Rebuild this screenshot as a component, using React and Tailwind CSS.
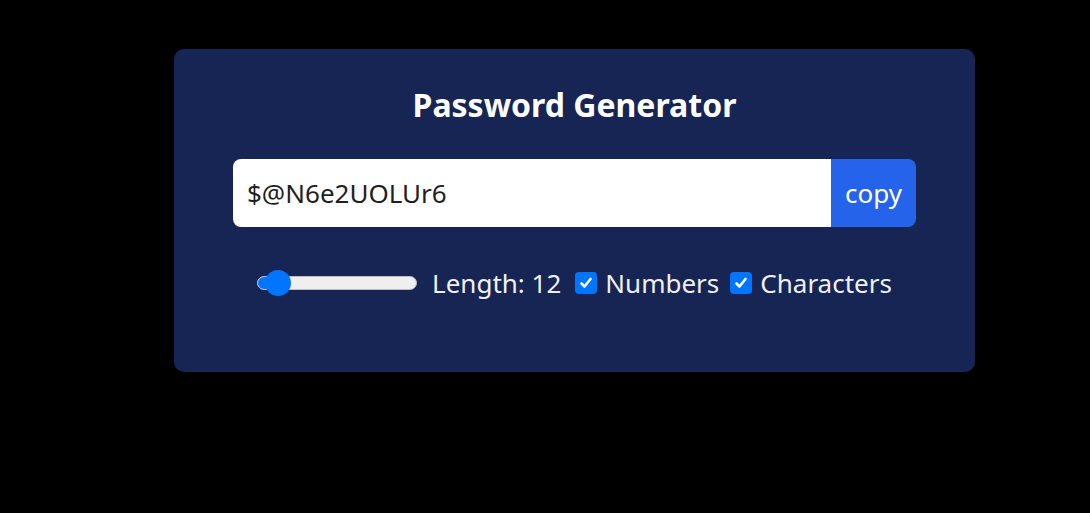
import React, { useState } from "react";

const font = { fontFamily: '"Noto Sans", "Open Sans", sans-serif' };

const Check = ({ checked, onChange, label }) => (
  <label className="flex items-center gap-[8px] cursor-pointer">
    <span
      onClick={onChange}
      className="w-[22px] h-[22px] rounded-[4px] bg-[#0075ff] flex items-center justify-center"
    >
      {checked && (
        <svg width="14" height="14" viewBox="0 0 14 14" fill="none">
          <path d="M2.5 7.5 L5.5 10.5 L11.5 3" stroke="white" strokeWidth="2.6" strokeLinecap="round" strokeLinejoin="round" />
        </svg>
      )}
    </span>
    <span>{label}</span>
  </label>
);

export default function App() {
  const [numbers, setNumbers] = useState(true);
  const [chars, setChars] = useState(true);
  const length = 12;

  return (
    <div className="min-h-[513px] bg-black pt-[49px]" style={font}>
      <div className="ml-[174px] w-[801px] h-[323px] rounded-[10px] bg-[#172554] px-[59px] pt-[37px]">
        <h1 className="text-center text-white text-[32px] leading-[38px] font-bold">
          Password Generator
        </h1>

        {/* Password + copy */}
        <div className="mt-[35px] flex h-[68px] rounded-lg overflow-hidden">
          <input
            readOnly
            value="$@N6e2UOLUr6"
            className="flex-1 bg-white px-[14px] text-[26px] text-[#1f1f1f] outline-none"
            style={font}
          />
          <button className="w-[85px] bg-[#2563eb] text-white text-[26px]">copy</button>
        </div>

        {/* Options */}
        <div className="mt-[38px] flex items-center justify-center text-[26px] text-[#f0f0f0] h-[36px]">
          <div className="relative w-[160px] h-[26px] flex items-center">
            <div className="w-full h-[14px] rounded-full bg-[#efefef] border border-[#bdbdbd] overflow-hidden">
              <div className="h-full w-[18px] bg-[#0075ff]" />
            </div>
            <div className="absolute left-[8px] top-0 w-[26px] h-[26px] rounded-full bg-[#0075ff]" />
          </div>
          <span className="ml-[15px]">Length: {length}</span>
          <div className="ml-[14px]">
            <Check checked={numbers} onChange={() => setNumbers(!numbers)} label="Numbers" />
          </div>
          <div className="ml-[11px]">
            <Check checked={chars} onChange={() => setChars(!chars)} label="Characters" />
          </div>
        </div>
      </div>
    </div>
  );
}
